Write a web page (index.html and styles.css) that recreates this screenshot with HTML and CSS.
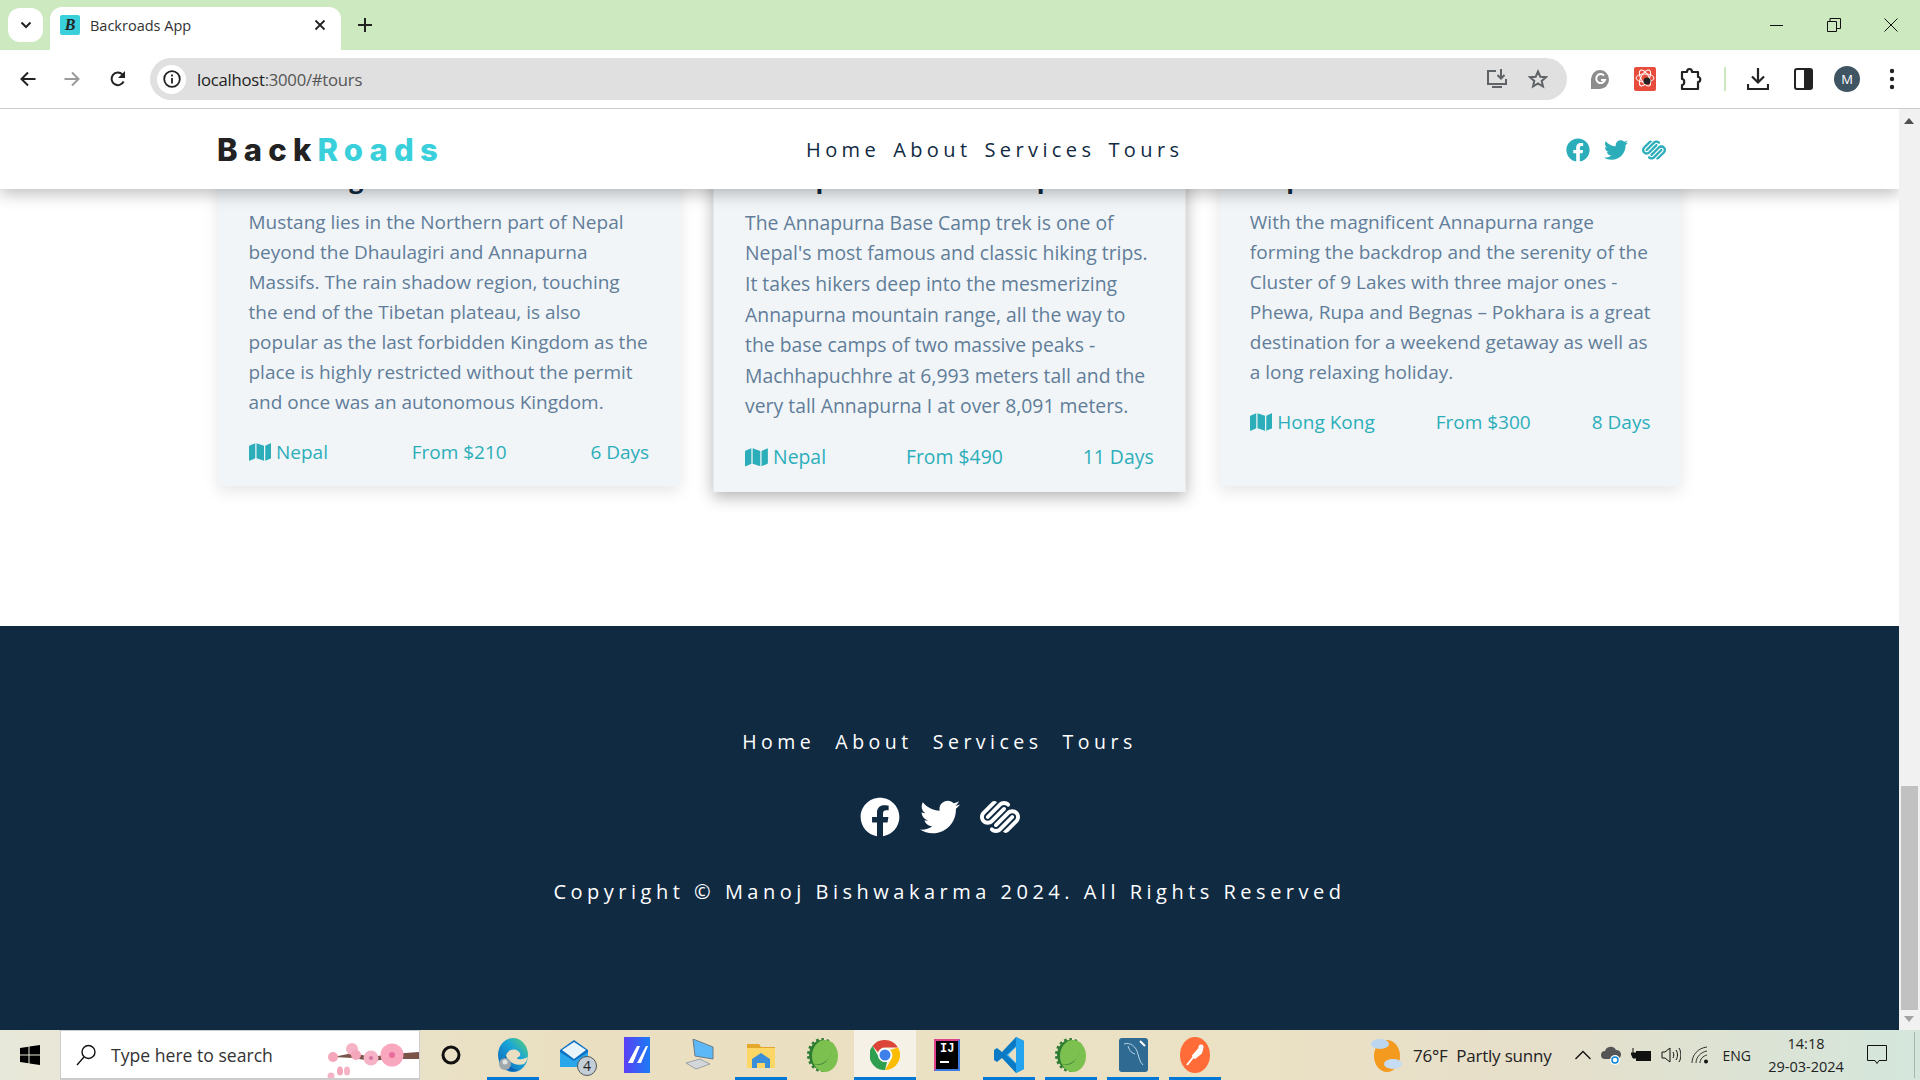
FILE: index.html
```html
<!DOCTYPE html>
<html lang="en">
<head>
    <meta charset="utf-8">
    <title>Backroads App</title>
    <link rel="stylesheet" href="styles.css">
</head>
<body>
    <svg class="sprites" width="0" height="0">
        <symbol id="ic-fb" viewBox="0 0 512 512"><path d="M504 256C504 119 393 8 256 8S8 119 8 256c0 123.78 90.69 226.38 209.25 245V327.69h-63V256h63v-54.64c0-62.15 37-96.48 93.67-96.48 27.14 0 55.52 4.84 55.52 4.84v61h-31.28c-30.8 0-40.41 19.12-40.41 38.73V256h68.78l-11 71.69h-57.78V501C413.31 482.38 504 379.78 504 256z"/></symbol>
        <symbol id="ic-tw" viewBox="0 0 512 512"><path d="M459.37 151.716c.325 4.548.325 9.097.325 13.645 0 138.72-105.583 298.558-298.558 298.558-59.452 0-114.68-17.219-161.137-47.106 8.447.974 16.568 1.299 25.34 1.299 49.055 0 94.213-16.568 130.274-44.832-46.132-.975-84.792-31.188-98.112-72.772 6.498.974 12.995 1.624 19.818 1.624 9.421 0 18.843-1.3 27.614-3.573-48.081-9.747-84.143-51.98-84.143-102.985v-1.299c13.969 7.797 30.214 12.67 47.431 13.319-28.264-18.843-46.781-51.005-46.781-87.391 0-19.492 5.197-37.36 14.294-52.954 51.655 63.675 129.3 105.258 216.365 109.807-1.624-7.797-2.599-15.918-2.599-24.04 0-57.828 46.782-104.934 104.934-104.934 30.213 0 57.502 12.67 76.67 33.137 23.715-4.548 46.456-13.32 66.599-25.34-7.798 24.366-24.366 44.833-46.132 57.827 21.117-2.273 41.584-8.122 60.426-16.243-14.292 20.791-32.161 39.308-52.628 54.253z"/></symbol>
        <symbol id="ic-sq" viewBox="0 0 512 512"><path d="M186.12 343.34c-9.65 9.65-9.65 25.29 0 34.94 9.65 9.65 25.29 9.65 34.94 0L378.24 221.1c19.29-19.29 50.57-19.29 69.86 0s19.29 50.57 0 69.86L293.95 445.1c19.27 19.29 50.53 19.31 69.82.04l.04-.04 119.25-119.24c38.59-38.59 38.59-101.14 0-139.72-38.59-38.59-101.15-38.59-139.72 0l-157.22 157.2zm244.53-104.8c-9.65-9.65-25.29-9.65-34.93 0l-157.2 157.18c-19.27 19.29-50.53 19.31-69.82.05l-.05-.05c-9.64-9.64-25.27-9.65-34.92-.01l-.01.01c-9.65 9.64-9.66 25.28-.02 34.93l.02.02c38.58 38.57 101.14 38.57 139.72 0l157.2-157.2c9.65-9.65 9.65-25.29.01-34.93zm-261.99 87.33l157.18-157.18c9.64-9.65 9.64-25.29 0-34.94-9.64-9.64-25.27-9.64-34.91 0L133.72 290.92c-19.28 19.29-50.56 19.31-69.85.01l-.01-.01c-19.29-19.28-19.31-50.54-.03-69.84l.03-.03L218.03 66.89c-19.28-19.29-50.55-19.31-69.85-.02l-.02.02L28.93 186.14c-38.58 38.59-38.58 101.14 0 139.72 38.6 38.59 101.13 38.59 139.73.01zm-87.33-52.4c9.64 9.64 25.27 9.64 34.91 0l157.21-157.19c19.28-19.29 50.55-19.3 69.84 0 9.65 9.65 25.29 9.65 34.93 0 9.65-9.65 9.65-25.29 0-34.93-38.58-38.59-101.13-38.59-139.72 0l-157.2 157.2c-9.63 9.65-9.63 25.29.03 34.92z"/></symbol>
        <symbol id="ic-map" viewBox="0 0 576 512"><path d="M0 117.66v346.32c0 11.32 11.43 19.06 21.94 14.86L160 416V32L20.12 87.95A32.006 32.006 0 0 0 0 117.66zM192 416l192 64V96L192 32v384zM554.06 33.16L416 96v384l139.88-55.95A31.996 31.996 0 0 0 576 394.34V48.02c0-11.32-11.43-19.06-21.94-14.86z"/></symbol>
        <symbol id="ic-spring" viewBox="0 0 32 36">
            <ellipse cx="15" cy="18" rx="13" ry="15" fill="#2f7d32" stroke="#2f7d32" stroke-width="4" stroke-dasharray="2.500 2.500"/>
            <ellipse cx="18" cy="19" rx="13" ry="16" fill="#7cc04f"/>
            <path fill="#2f7d32" d="M6 27c7 3 15 0 19-13-2 9-10 15-19 13z"/>
        </symbol>
    </svg>

    <header class="tabstrip">
        <button class="tab-search"><svg width="12" height="8" viewBox="0 0 12 8"><path d="M1.500 1.500L6 6l4.500-4.500" fill="none" stroke="#222" stroke-width="2"/></svg></button>
        <div class="tab">
            <span class="favicon">B</span>
            <span class="tab-title">Backroads App</span>
            <svg class="tab-close" width="12" height="12" viewBox="0 0 12 12"><path d="M1.500 1.500l9 9M10.500 1.500l-9 9" stroke="#222" stroke-width="1.800"/></svg>
        </div>
        <svg class="tab-new" width="14" height="14" viewBox="0 0 14 14"><path d="M7 0v14M0 7h14" stroke="#222" stroke-width="2"/></svg>
        <div class="win-controls">
            <svg width="14" height="14" viewBox="0 0 14 14"><path d="M0 7.500h13" stroke="#111"/></svg>
            <svg width="14" height="14" viewBox="0 0 14 14"><path d="M.5 3.500h9v10h-9zM3 3.500V.5h10.500v10h-4" fill="none" stroke="#111"/></svg>
            <svg width="14" height="14" viewBox="0 0 14 14"><path d="M.5.500l13 13M13.500.5l-13 13" stroke="#111"/></svg>
        </div>
    </header>

    <div class="toolbar">
        <svg class="tb-back" width="16" height="16" viewBox="0 0 16 16"><path d="M15.500 8H2M8 1.500L1.500 8 8 14.500" fill="none" stroke="#222" stroke-width="2"/></svg>
        <svg class="tb-forward" width="16" height="16" viewBox="0 0 16 16"><path d="M.5 8H14M8 1.500L14.500 8 8 14.500" fill="none" stroke="#9a9a9a" stroke-width="2"/></svg>
        <svg class="tb-reload" width="16" height="16" viewBox="0 0 16 16"><path d="M13.600 10.500A6.300 6.300 0 1 1 12.400 3.400" fill="none" stroke="#222" stroke-width="2"/><path d="M15 0v7H8z" fill="#222"/></svg>
        <div class="omnibox">
            <span class="site-info"><svg width="18" height="18" viewBox="0 0 18 18"><circle cx="9" cy="9" r="7.800" fill="none" stroke="#222" stroke-width="1.800"/><path d="M9 8v5.500M9 4.500v2" stroke="#222" stroke-width="1.800"/></svg></span>
            <span class="url">localhost<span class="url-rest">:3000/#tours</span></span>
            <svg class="omni-install" width="22" height="22" viewBox="0 0 22 22"><path d="M10 3H2v13h18v-5" fill="none" stroke="#5f6368" stroke-width="2"/><path d="M6 19h10M15 1v9M11.500 7l3.500 3.500L18.500 7" fill="none" stroke="#5f6368" stroke-width="2"/></svg>
            <svg class="omni-star" width="20" height="20" viewBox="0 0 20 20"><path d="M10 2.500l2.300 5.200 5.700.5-4.300 3.700 1.300 5.600L10 14.500l-5 3 1.300-5.600L2 8.200l5.700-.5z" fill="none" stroke="#5f6368" stroke-width="2"/></svg>
        </div>
        <svg class="tb-grammarly" width="20" height="22" viewBox="0 0 20 22"><path d="M1 21V11a9 9.500 0 1 1 9 10z" fill="#8d8d8d"/><path d="M14 7.500a4.500 4.500 0 1 0 1 4.500h-4" fill="none" stroke="#fff" stroke-width="2"/></svg>
        <svg class="tb-react" width="22" height="24" viewBox="0 0 22 24"><rect width="22" height="24" rx="2" fill="#e74c3c"/><ellipse cx="11" cy="11" rx="9" ry="4" fill="none" stroke="#fff" transform="rotate(60 11 11)"/><ellipse cx="11" cy="11" rx="9" ry="4" fill="none" stroke="#fff" transform="rotate(-60 11 11)"/><ellipse cx="11" cy="11" rx="9" ry="4" fill="none" stroke="#fff"/><circle cx="13" cy="14" r="3.500" fill="#222"/></svg>
        <svg class="tb-puzzle" width="22" height="24" viewBox="0 0 22 24"><path d="M2 5h5c0-4 5-4 5 0h6v5c3 0 3 5 0 5v7H2v-4c3 0 3-6 0-6z" fill="none" stroke="#222" stroke-width="2.200" stroke-linejoin="round"/></svg>
        <span class="tb-sep"></span>
        <svg class="tb-download" width="22" height="24" viewBox="0 0 22 24"><path d="M11 1v14M5 9.500l6 6 6-6M1 17v5h20v-5" fill="none" stroke="#222" stroke-width="2.200"/></svg>
        <svg class="tb-sidebar" width="19" height="22" viewBox="0 0 19 22"><rect x="1" y="1" width="17" height="20" rx="2" fill="#fff" stroke="#222" stroke-width="2"/><rect x="10" y="1" width="8" height="20" fill="#222"/></svg>
        <span class="avatar">M</span>
        <svg class="tb-menu" width="6" height="22" viewBox="0 0 6 22"><circle cx="3" cy="3" r="2.200" fill="#222"/><circle cx="3" cy="11" r="2.200" fill="#222"/><circle cx="3" cy="19" r="2.200" fill="#222"/></svg>
    </div>

    <div class="viewport">
        <div class="page">
            <nav class="navbar">
                <h4 class="logo">Back<span>Roads</span></h4>
                <ul class="nav-links">
                    <li>Home</li>
                    <li>About</li>
                    <li>Services</li>
                    <li>Tours</li>
                </ul>
                <div class="nav-icons">
                    <svg><use href="#ic-fb"/></svg>
                    <svg><use href="#ic-tw"/></svg>
                    <svg><use href="#ic-sq"/></svg>
                </div>
            </nav>

            <section class="tours">
                <article class="tour-card">
                    <div class="tour-img"></div>
                    <div class="tour-info">
                        <h4>Mustang Trek</h4>
                        <p>Mustang lies in the Northern part of Nepal beyond the Dhaulagiri and Annapurna Massifs. The rain shadow region, touching the end of the Tibetan plateau, is also popular as the last forbidden Kingdom as the place is highly restricted without the permit and once was an autonomous Kingdom.</p>
                        <div class="tour-footer">
                            <span class="tour-place"><svg><use href="#ic-map"/></svg>Nepal</span>
                            <span>From $210</span>
                            <span>6 Days</span>
                        </div>
                    </div>
                </article>
                <article class="tour-card active">
                    <div class="tour-img"></div>
                    <div class="tour-info">
                        <h4>Annapurna Base Camp</h4>
                        <p>The Annapurna Base Camp trek is one of Nepal's most famous and classic hiking trips. It takes hikers deep into the mesmerizing Annapurna mountain range, all the way to the base camps of two massive peaks - Machhapuchhre at 6,993 meters tall and the very tall Annapurna I at over 8,091 meters.</p>
                        <div class="tour-footer">
                            <span class="tour-place"><svg><use href="#ic-map"/></svg>Nepal</span>
                            <span>From $490</span>
                            <span>11 Days</span>
                        </div>
                    </div>
                </article>
                <article class="tour-card">
                    <div class="tour-img"></div>
                    <div class="tour-info">
                        <h4>Trip to Lakes</h4>
                        <p>With the magnificent Annapurna range forming the backdrop and the serenity of the Cluster of 9 Lakes with three major ones - Phewa, Rupa and Begnas – Pokhara is a great destination for a weekend getaway as well as a long relaxing holiday.</p>
                        <div class="tour-footer">
                            <span class="tour-place"><svg><use href="#ic-map"/></svg>Hong Kong</span>
                            <span>From $300</span>
                            <span>8 Days</span>
                        </div>
                    </div>
                </article>
            </section>

            <footer class="site-footer">
                <ul class="footer-links">
                    <li>Home</li>
                    <li>About</li>
                    <li>Services</li>
                    <li>Tours</li>
                </ul>
                <div class="footer-icons">
                    <svg><use href="#ic-fb"/></svg>
                    <svg><use href="#ic-tw"/></svg>
                    <svg><use href="#ic-sq"/></svg>
                </div>
                <p class="copyright">Copyright © Manoj Bishwakarma 2024. All Rights Reserved</p>
            </footer>
        </div>
        <div class="scrollbar">
            <span class="arrow-up"></span>
            <span class="thumb"></span>
            <span class="arrow-down"></span>
        </div>
    </div>

    <div class="taskbar">
        <div class="start"><svg width="20" height="20" viewBox="0 0 20 20"><path d="M0 3l8.500-1.300v7.800H0zM9.500 1.500L20 0v9.500H9.500zM0 10.500h8.500v7.800L0 17zM9.500 10.500H20V20L9.500 18.500z" fill="#000"/></svg></div>
        <div class="search">
            <svg width="22" height="22" viewBox="0 0 22 22"><circle cx="13.500" cy="8" r="6.500" fill="none" stroke="#111" stroke-width="1.400"/><path d="M9 13L2 21" stroke="#111" stroke-width="1.400"/></svg>
            <span>Type here to search</span>
            <svg class="blossom" width="92" height="48" viewBox="0 0 92 48">
                <path d="M6 26l20-4 18 4 20-3 28-2v7l-28 0-20 2-18-3-20-1z" fill="#7a5448"/>
                <circle cx="6" cy="26" r="5" fill="#f4a6bb"/>
                <circle cx="25" cy="18" r="6" fill="#f7b3c6"/>
                <circle cx="29" cy="24" r="5" fill="#f4a6bb"/>
                <circle cx="44" cy="27" r="7.500" fill="#f6b3c8"/>
                <circle cx="44" cy="27" r="2" fill="#d873a0"/>
                <circle cx="65" cy="24" r="11.500" fill="#f9a7bf"/>
                <circle cx="65" cy="24" r="3" fill="#e86c9c"/>
                <circle cx="4" cy="45" r="3.500" fill="#f7b3c6"/>
                <ellipse cx="13" cy="40" rx="3" ry="4.500" fill="#f4a6bb"/>
                <ellipse cx="20" cy="40" rx="3" ry="4.500" fill="#f7b3c6"/>
            </svg>
        </div>
        <div class="task-items">
            <span class="task-item"><svg width="20" height="20" viewBox="0 0 20 20"><circle cx="10" cy="10" r="8" fill="none" stroke="#111" stroke-width="3"/></svg></span>
            <span class="task-item has-line"><svg width="30" height="34" viewBox="0 0 30 34"><defs><linearGradient id="grad-edge" x1="0" y1="1" x2="1" y2="0"><stop offset="0" stop-color="#0b62b5"/><stop offset="0.6" stop-color="#1aa5d8"/><stop offset="1" stop-color="#5fd36b"/></linearGradient></defs><ellipse cx="15" cy="17" rx="15" ry="17" fill="url(#grad-edge)"/><path d="M8 18c1-6 8-8 12-5 3 2 3 5 0 6-3 2 2 4 10 0-1 3-2 5-4 7-6 2-14 0-18-8z" fill="#eadfc0"/><path d="M8 18c0 6 5 13 12 14-8 3-15-2-17-9z" fill="#0b62b5"/><circle cx="7" cy="26" r="6" fill="#9ea7ab"/><circle cx="7" cy="24" r="2.500" fill="#e4e4e4"/></svg></span>
            <span class="task-item"><svg width="32" height="32" viewBox="0 0 32 32"><path d="M1 11L15 1l14 10v16H1z" fill="#0a6fc2"/><path d="M1 13l14 9 14-9v15H1z" fill="#2aa7ea"/><path d="M3 11l12 9 12-9-12-8z" fill="#e8f4fb"/></svg><b class="badge">4</b></span>
            <span class="task-item"><svg width="26" height="36" viewBox="0 0 26 36"><defs><linearGradient id="grad-m" x1="0" x2="1"><stop offset="0" stop-color="#5b3ff5"/><stop offset="1" stop-color="#1a7cf5"/></linearGradient></defs><rect width="26" height="36" fill="url(#grad-m)"/><path d="M4 26L13 9h3L9 26zM13 26l9-17h2l-7 17z" fill="#fff"/></svg></span>
            <span class="task-item"><svg width="30" height="32" viewBox="0 0 30 32"><path d="M9 0l20 8v12L11 17z" fill="#5cb8f6" stroke="#6b7a88"/><path d="M2 24l14-4 10 5-14 5z" fill="#d4d7da" stroke="#9aa1a6"/></svg></span>
            <span class="task-item has-line"><svg width="28" height="26" viewBox="0 0 28 26"><path d="M0 2h12l2 3h14v21H0z" fill="#e4a72b"/><path d="M0 6h28v20H0z" fill="#fcd766"/><path d="M5 26V17l9-6 9 6v9h-5v-5h-8v5z" fill="#3a8fd8"/></svg></span>
            <span class="task-item"><svg width="32" height="36"><use href="#ic-spring"/></svg></span>
            <span class="task-item has-line active"><svg width="30" height="30" viewBox="0 0 30 30"><path d="M15 0a15 15 0 0 1 13 7.500H15a7.500 7.500 0 0 0-7 4.800L2.500 6A15 15 0 0 1 15 0z" fill="#db4437"/><path d="M28 7.500A15 15 0 0 1 15 30l6.500-11.200A7.500 7.500 0 0 0 20 10z" fill="#fbbc04"/><path d="M2.500 6L9 17.500A7.500 7.500 0 0 0 17 22l-2 8A15 15 0 0 1 2.500 6z" fill="#2e9e4f"/><circle cx="15" cy="15" r="7" fill="#fff"/><circle cx="15" cy="15" r="5.500" fill="#3f80ea"/></svg></span>
            <span class="task-item"><span class="ij-logo"><span class="ij-text">IJ</span></span></span>
            <span class="task-item has-line"><svg width="30" height="36" viewBox="0 0 30 36"><path d="M22 0l8 4v28l-8 4L8 21l-5 4-3-2v-10l3-2 5 4z" fill="#0a7ac4"/><path d="M22 0l8 4v28l-8 4V27l-10-9 10-9z" fill="#24a3ee"/><path d="M22 10l-8 8 8 8z" fill="#e8dfc3"/></svg></span>
            <span class="task-item has-line"><svg width="32" height="36"><use href="#ic-spring"/></svg></span>
            <span class="task-item has-line"><svg width="29" height="34" viewBox="0 0 29 34"><rect width="29" height="34" rx="3" fill="#2f6a93"/><path d="M5 6c6-2 12 2 14 10 1 4 2 8 5 11M9 8c2 6 4 7 7 8" fill="none" stroke="#b7d5e6"/><path d="M21 3l5 5" stroke="#fff" stroke-width="2"/></svg></span>
            <span class="task-item has-line"><svg width="30" height="36" viewBox="0 0 30 36"><ellipse cx="15" cy="18" rx="15" ry="18" fill="#ff6c37"/><path d="M7 28l8-10M13 19l6-7 3 1-1 3-6 5z" stroke="#fff" stroke-width="2" fill="#fff"/><circle cx="21" cy="10" r="2.500" fill="#fff"/></svg></span>
        </div>
        <div class="tray">
            <svg class="tray-weather" width="32" height="34" viewBox="0 0 32 34"><ellipse cx="16" cy="18" rx="13" ry="16" fill="#f39a1f"/><ellipse cx="9" cy="6" rx="9" ry="5" fill="#bcd6ef"/><ellipse cx="22" cy="26" rx="9" ry="5" fill="#c6dcf2"/></svg>
            <span class="tray-text">76°F&nbsp; Partly sunny</span>
            <svg class="tray-caret" width="16" height="10" viewBox="0 0 16 10"><path d="M.5 9L8 1.500 15.500 9" fill="none" stroke="#111" stroke-width="1.300"/></svg>
            <svg class="tray-icon" width="20" height="20" viewBox="0 0 20 20"><path d="M4 14a4 4 0 0 1 0-8 6 6 0 0 1 11-1 4 4 0 0 1 1 9z" fill="#555"/><circle cx="14" cy="15" r="5" fill="#fff"/><circle cx="14" cy="15" r="3" fill="none" stroke="#0a84d8" stroke-width="1.500"/></svg>
            <svg class="tray-icon" width="20" height="14" viewBox="0 0 20 14"><path d="M2 0v5M0 5h5v5H2z" fill="#111" stroke="#111"/><rect x="5" y="3" width="15" height="10" fill="#111"/></svg>
            <svg class="tray-icon" width="20" height="18" viewBox="0 0 20 18"><path d="M1 6h3l5-4v14l-5-4H1z" fill="none" stroke="#111"/><path d="M12 6c1 2 1 4 0 6M15 4c2 3 2 7 0 10M18 2c2.500 4 2.500 10 0 14" fill="none" stroke="#111"/></svg>
            <svg class="tray-icon" width="20" height="18" viewBox="0 0 20 18"><path d="M1 17c0-8 6-15 15-16M5 17c0-6 5-11 11-12M9 17c0-4 3-7 7-8" fill="none" stroke="#333"/><circle cx="15" cy="15.500" r="2" fill="#111"/></svg>
            <span class="tray-lang">ENG</span>
            <div class="tray-clock"><span>14:18</span><span>29-03-2024</span></div>
            <svg class="tray-notify" width="20" height="20" viewBox="0 0 20 20"><path d="M.5.500h19v15H12l-2 3-2-3H.5z" fill="none" stroke="#111"/></svg>
        </div>
    </div>
</body>
</html>
```

FILE: styles.css
```css
* {
    box-sizing: border-box;
}
html, body {
    margin: 0;
    height: 100%;
}
body {
    width: 1920px;
    height: 1080px;
    overflow: hidden;
    display: flex;
    flex-direction: column;
    font-family: "Open Sans", sans-serif;
    background: #fff;
}
ul {
    list-style: none;
    margin: 0;
    padding: 0;
}
.sprites {
    position: absolute;
}

/* browser chrome */
.tabstrip {
    height: 50px;
    flex: none;
    background: #cce9bf;
    display: flex;
    align-items: flex-start;
    padding-left: 8px;
}
.tab-search {
    width: 35px;
    height: 34px;
    margin-top: 8px;
    border: 0;
    border-radius: 12px;
    background: #fff;
    display: flex;
    align-items: center;
    justify-content: center;
}
.tab {
    width: 291px;
    height: 43px;
    margin: 7px 0 0 7px;
    background: #fff;
    border-radius: 12px 12px 0 0;
    display: flex;
    align-items: center;
    padding: 0 15px 7px 10px;
    font-size: 14.5px;
    color: #333;
}
.favicon {
    width: 20px;
    height: 20px;
    background: #3ad0db;
    color: #222;
    font: italic bold 16px "Liberation Serif", serif;
    text-align: center;
    line-height: 20px;
    border-radius: 2px;
    margin-right: 10px;
}
.tab-title {
    flex: 1;
}
.tab-new {
    margin: 18px 0 0 17px;
}
.win-controls {
    margin-left: auto;
    display: flex;
    gap: 43px;
    padding: 18px 22px 0 0;
}
.toolbar {
    height: 59px;
    flex: none;
    background: #fff;
    border-bottom: 1px solid #ccc;
    display: flex;
    align-items: center;
}
.tb-back {
    margin-left: 20px;
}
.tb-forward {
    margin-left: 28px;
}
.tb-reload {
    margin-left: 30px;
}
.omnibox {
    width: 1417px;
    height: 42px;
    margin-left: 24px;
    background: #e0e0e0;
    border-radius: 21px;
    display: flex;
    align-items: center;
    padding-left: 7px;
}
.site-info {
    width: 29px;
    height: 29px;
    background: #fff;
    border-radius: 50%;
    display: flex;
    align-items: center;
    justify-content: center;
}
.url {
    margin-left: 11px;
    font-size: 16.7px;
    color: #222;
    letter-spacing: -0.25px;
}
.url-rest {
    color: #555;
}
.omni-install {
    margin-left: auto;
}
.omni-star {
    margin: 0 19px 0 20px;
}
.tb-grammarly {
    margin-left: 23px;
}
.tb-react,
.tb-puzzle {
    margin-left: 24px;
}
.tb-sep {
    width: 2px;
    height: 24px;
    background: #cce9bf;
    margin: 0 21px 0 22px;
}
.tb-sidebar {
    margin-left: 25px;
}
.avatar {
    width: 26px;
    height: 26px;
    margin-left: 21px;
    border-radius: 50%;
    background: #3f5563;
    color: #fff;
    font-size: 13px;
    text-align: center;
    line-height: 26px;
}
.tb-menu {
    margin-left: 29px;
}

/* scrolled page, pinned to its bottom edge */
.viewport {
    flex: 1;
    min-height: 0;
    display: flex;
}
.page {
    position: relative;
    flex: 1;
    min-width: 0;
    overflow: hidden;
    display: flex;
    flex-direction: column;
    justify-content: flex-end;
}
.navbar {
    position: absolute;
    top: 0;
    left: 0;
    right: 0;
    height: 80px;
    z-index: 2;
    background: #fff;
    box-shadow: 0 5px 15px rgba(0, 0, 0, 0.25);
    display: flex;
    align-items: center;
    padding-left: 217px;
}
.logo {
    flex: 0 0 589px;
    margin: 0;
    font-family: Inter, sans-serif;
    font-size: 31px;
    line-height: 1;
    font-weight: 800;
    letter-spacing: 6.2px;
    color: #222;
}
.logo span {
    color: #3ad0db;
}
.nav-links {
    display: flex;
    gap: 13px;
    font-size: 20px;
    letter-spacing: 4.4px;
    color: #102a42;
}
.nav-icons {
    margin: 2px 0 0 383px;
    display: flex;
    gap: 14px;
}
.nav-icons svg {
    width: 24px;
    height: 24px;
    fill: #2caeba;
}
.tours {
    flex: none;
    width: 1464px;
    margin: 0 auto 140px;
    display: grid;
    grid-template-columns: repeat(3, 1fr);
    gap: 38px;
}
.tour-card {
    background: #f1f5f8;
    box-shadow: 0 5px 15px rgba(0, 0, 0, 0.1);
    display: flex;
    flex-direction: column;
}
.tour-card.active {
    transform: scale(1.02);
    box-shadow: 0 5px 15px rgba(0, 0, 0, 0.3);
}
.tour-card:last-child p {
    margin-right: -8px;
}
.tour-img {
    height: 253px;
}
.tour-info {
    flex: 1;
    padding: 22px 31px 19px;
}
.tour-info h4 {
    margin: 0 0 16px;
    font-size: 25px;
    line-height: 26px;
    font-weight: 700;
    color: #102a42;
    letter-spacing: 1px;
}
.tour-info p {
    margin: 0 0 20px;
    font-size: 19px;
    line-height: 30px;
    color: #617d98;
}
.tour-footer {
    display: flex;
    justify-content: space-between;
    font-size: 19px;
    line-height: 30px;
    color: #2caeba;
}
.tour-place svg {
    width: 22.500px;
    height: 20px;
    fill: #2caeba;
    margin-right: 5px;
    vertical-align: -3px;
}
.site-footer {
    flex: none;
    height: 404px;
    background: #102a42;
    color: #fff;
    padding-top: 102px;
    text-align: center;
}
.footer-links {
    display: flex;
    justify-content: center;
    font-size: 19.5px;
    line-height: 28px;
    letter-spacing: 4.5px;
}
.footer-links li {
    margin-right: 20px;
}
.footer-icons {
    display: flex;
    justify-content: center;
    margin-top: 41px;
}
.footer-icons svg {
    width: 40px;
    height: 40px;
    fill: #fff;
    margin-right: 20px;
}
.copyright {
    margin: 41px 0 0;
    font-size: 20px;
    line-height: 28px;
    letter-spacing: 4.5px;
}
.scrollbar {
    width: 21px;
    flex: none;
    background: #f1f1f1;
    position: relative;
}
.arrow-up, .arrow-down {
    position: absolute;
    left: 5px;
    border-left: 5px solid transparent;
    border-right: 5px solid transparent;
}
.arrow-up {
    top: 9px;
    border-bottom: 6px solid #505050;
}
.arrow-down {
    bottom: 8px;
    border-top: 6px solid #a3a3a3;
}
.thumb {
    position: absolute;
    left: 2px;
    right: 2px;
    top: 677px;
    height: 224px;
    background: #c1c1c1;
}

/* windows taskbar */
.taskbar {
    height: 50px;
    flex: none;
    display: flex;
    align-items: center;
    background: linear-gradient(90deg, #e8e8da 0%, #eadfc0 30%, #ebe1c4 65%, #e6dfca 80%, #d4e6dc 100%);
    font-size: 17px;
    color: #222;
}
.start {
    width: 60px;
    display: flex;
    justify-content: center;
}
.search {
    width: 360px;
    height: 50px;
    background: #fff;
    border: 1px solid #ccc;
    border-bottom-width: 2px;
    display: flex;
    align-items: center;
    padding-left: 14px;
    position: relative;
    overflow: hidden;
}
.search span {
    margin-left: 14px;
    font-size: 17.6px;
    color: #333;
}
.blossom {
    position: absolute;
    right: 0;
    top: 0;
}
.task-items {
    display: flex;
    height: 50px;
}
.task-item {
    position: relative;
    width: 62px;
    height: 50px;
    display: flex;
    align-items: center;
    justify-content: center;
}
.task-item.has-line::after {
    content: "";
    position: absolute;
    left: 5px;
    right: 5px;
    bottom: 0;
    height: 3px;
    background: #0078d4;
}
.task-item.active {
    background: #f5f1e6;
}
.task-item.active::after {
    left: 0;
    right: 0;
}
.badge {
    position: absolute;
    right: 9px;
    bottom: 4px;
    width: 20px;
    height: 20px;
    border-radius: 50%;
    background: #c3ced6;
    border: 1px solid #555;
    font: 400 14px/18px "Open Sans", sans-serif;
    text-align: center;
}
.ij-logo {
    width: 26px;
    height: 32px;
    background: #000;
    border: 2px solid #3c7be0;
    border-top-color: #e0408a;
    border-left-color: #e0408a;
    padding: 2px 4px;
    color: #fff;
}
.ij-text {
    display: block;
    font: bold 12px/13px "Liberation Mono", monospace;
}
.ij-text::after {
    content: "";
    display: block;
    width: 9px;
    height: 2px;
    margin-top: 5px;
    background: #fff;
}
.tray {
    flex: 1;
    display: flex;
    align-items: center;
    padding-left: 145px;
    position: relative;
}
.tray::after {
    content: "";
    position: absolute;
    right: 5px;
    top: 0;
    bottom: 0;
    width: 1px;
    background: #a9b5ae;
}
.tray-text {
    margin-left: 10px;
    font-size: 17px;
    letter-spacing: -0.2px;
}
.tray-caret {
    margin-left: 23px;
}
.tray-icon {
    margin-left: 10px;
}
.tray-lang {
    margin-left: 12px;
    font-size: 14px;
}
.tray-clock {
    width: 106px;
    margin-left: 2px;
    display: flex;
    flex-direction: column;
    align-items: center;
    font-size: 14.5px;
    line-height: 23px;
}
.tray-notify {
    margin-left: 8px;
}
```
